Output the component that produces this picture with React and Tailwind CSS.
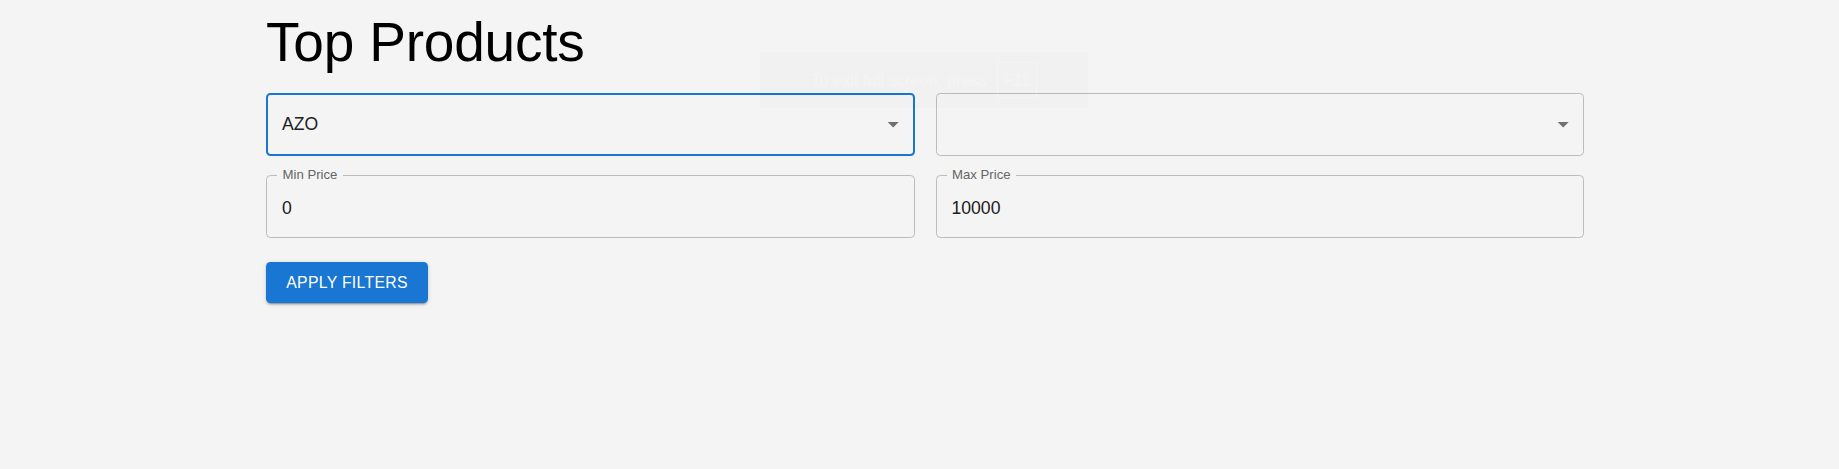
import React, { useState } from "react";

const FONT = { fontFamily: '"Liberation Sans", Arial, sans-serif' };

const ArrowDrop = () => (
  <svg viewBox="0 0 24 24" className="w-[26.4px] h-[26.4px] fill-[#707070] shrink-0">
    <path d="M7 10l5 5 5-5z" />
  </svg>
);

const SelectBox = ({ value, focused }) => (
  <div
    className={
      focused
        ? "h-[63px] flex items-center justify-between pl-[14px] pr-[6px] rounded-[4.4px] border-2 border-[#1976d2] cursor-pointer"
        : "h-[63px] flex items-center justify-between pl-[15px] pr-[7px] rounded-[4.4px] border border-[#bcbcbc] cursor-pointer"
    }
  >
    <span className="text-[17.6px] leading-none text-[#202020]">{value}</span>
    <ArrowDrop />
  </div>
);

const PriceField = ({ label, value, onChange }) => (
  <div className="relative h-[63px] flex items-center px-[15px] pt-[3px] rounded-[4.4px] border border-[#bcbcbc]">
    <span className="absolute left-[10px] -top-[8px] px-[5.5px] bg-[#f4f4f4] text-[13.2px] leading-none text-[#666]">
      {label}
    </span>
    <input
      value={value}
      onChange={(e) => onChange(e.target.value)}
      className="w-full bg-transparent outline-none text-[17.6px] leading-none text-[#202020]"
    />
  </div>
);

const App = () => {
  const [minPrice, setMinPrice] = useState("0");
  const [maxPrice, setMaxPrice] = useState("10000");

  return (
    <div className="relative w-full min-h-screen bg-[#f4f4f4]" style={FONT}>
      <div className="ml-[266px] w-[1318px] pt-[11px]">
        <h1 className="text-[55px] leading-[63px] text-black tracking-[-0.2px]">Top Products</h1>

        <div className="mt-[19px] grid grid-cols-2 gap-x-[21px] gap-y-[19px]">
          <SelectBox value="AZO" focused />
          <SelectBox value="" />
          <PriceField label="Min Price" value={minPrice} onChange={setMinPrice} />
          <PriceField label="Max Price" value={maxPrice} onChange={setMaxPrice} />
        </div>

        <button className="mt-[24px] h-[41px] w-[162px] flex items-center justify-center rounded-[4.4px] bg-[#1976d2] text-white text-[15.8px] leading-none uppercase tracking-[0.3px] shadow-[0_3px_1px_-2px_rgba(0,0,0,0.2),0_2px_2px_0_rgba(0,0,0,0.14),0_1px_5px_0_rgba(0,0,0,0.12)]">
          Apply Filters
        </button>
      </div>

      {/* browser full screen hint, barely visible */}
      <div className="absolute left-[760px] top-[52px] w-[328px] h-[56px] flex items-center justify-center gap-[10px] bg-black/[0.012] text-[16.4px] text-white/30 pointer-events-none">
        <span>To exit full screen, press</span>
        <span className="h-[38px] w-[40px] flex items-center justify-center border border-white/30 rounded-[3px]">F11</span>
      </div>
    </div>
  );
};

export default App;
